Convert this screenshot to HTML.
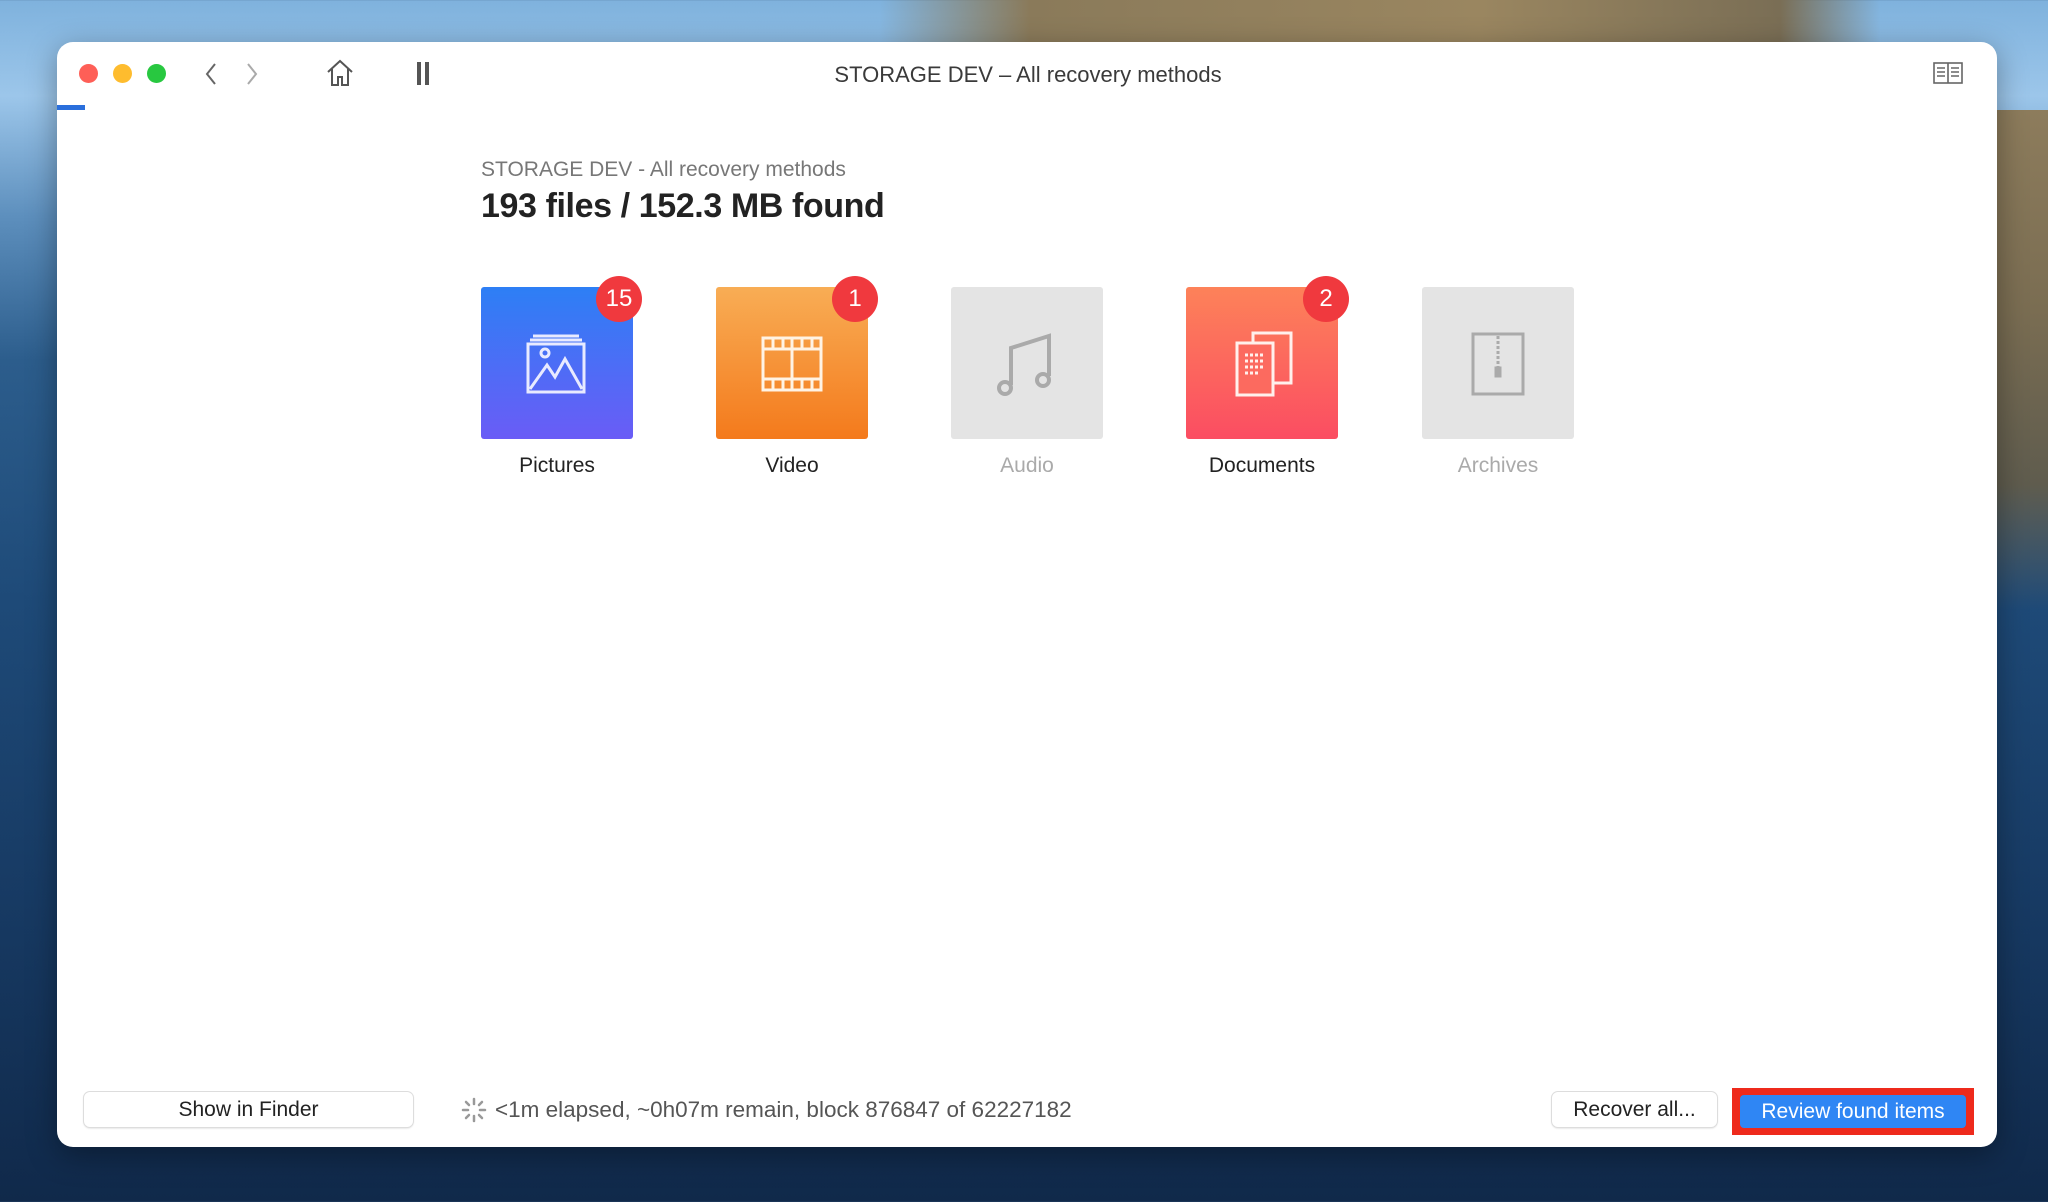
<!DOCTYPE html>
<html><head><meta charset="utf-8"><style>
*{margin:0;padding:0;box-sizing:border-box}
body{width:2048px;height:1202px;overflow:hidden;position:relative;font-family:"Liberation Sans",sans-serif;
background:linear-gradient(180deg,#7fb2dd 0%,#9cc6ea 8%,#5d8fbd 18%,#2c5d8c 30%,#1e4a78 50%,#173a63 75%,#10294a 100%);}
.mtn{position:absolute;left:880px;top:0;width:1000px;height:60px;background:linear-gradient(90deg,rgba(140,120,90,0) 0%,#8a7a5a 15%,#9a8660 60%,#7a6e55 90%,rgba(120,160,200,0) 100%)}
.cliff{position:absolute;right:0;top:110px;width:52px;height:500px;background:linear-gradient(180deg,#8d7c5c 0%,#7a6d52 40%,#5f5c4e 75%,rgba(40,70,100,0) 100%)}
.win{position:absolute;left:57px;top:42px;width:1940px;height:1105px;background:#fff;border-radius:16px;box-shadow:0 8px 30px rgba(0,0,0,.35);overflow:hidden}
.dot{position:absolute;top:64px;width:19px;height:19px;border-radius:50%}
.title{position:absolute;top:62px;left:4px;width:2048px;text-align:center;font-size:22px;color:#3a3a3a}
.tile{position:absolute;top:287px;width:152px;height:152px;border-radius:3px}
.lbl{position:absolute;top:454px;width:152px;text-align:center;font-size:21px;color:#222}
.badge{position:absolute;width:46px;height:46px;border-radius:50%;background:#f0393e;color:#fff;font-size:24px;text-align:center;line-height:46px}
.btn{position:absolute;top:1092px;height:35px;background:#fff;border-radius:6px;box-shadow:0 0 0 1px #ddd,0 1px 2px rgba(0,0,0,.2);font-size:21px;text-align:center;line-height:35px;color:#222}
</style></head><body>
<div class="mtn"></div><div class="cliff"></div>
<div class="win"></div>
<div class="dot" style="left:79px;background:#fe5f57"></div>
<div class="dot" style="left:113px;background:#febc2e"></div>
<div class="dot" style="left:147px;background:#28c840"></div>
<svg style="position:absolute;left:200px;top:62px" width="70" height="24" fill="none" stroke-width="2"><path d="M15 2 L7 12 L15 22" stroke="#666"/><path d="M48 2 L56 12 L48 22" stroke="#aaa"/></svg>
<svg style="position:absolute;left:325px;top:58px" width="30" height="30" fill="none" stroke="#555" stroke-width="2"><path d="M3 14 L15 3 L27 14 M7 11 V27 H13 V19 H17 V27 H23 V11"/></svg>
<div style="position:absolute;left:417px;top:62px;width:4px;height:23px;background:#555"></div>
<div style="position:absolute;left:425px;top:62px;width:4px;height:23px;background:#555"></div>
<div class="title">STORAGE DEV – All recovery methods</div>
<svg style="position:absolute;left:1933px;top:62px" width="30" height="22" fill="none" stroke="#666" stroke-width="1.6"><rect x="1" y="1" width="28" height="20"/><path d="M15 1V21M4 6H12M4 10H12M4 14H12M18 6H26M18 10H26M18 14H26"/></svg>
<div style="position:absolute;left:57px;top:105px;width:28px;height:5px;background:#2a6fdc"></div>
<div style="position:absolute;left:481px;top:158px;font-size:21px;color:#777">STORAGE DEV - All recovery methods</div>
<div style="position:absolute;left:481px;top:187px;font-size:34px;font-weight:bold;color:#222;letter-spacing:-0.4px">193 files / 152.3 MB found</div>

<div class="tile" style="left:481px;background:linear-gradient(180deg,#2d7ff5,#6a5cf6)"></div>
<svg style="position:absolute;left:525px;top:333px" width="62" height="62" fill="none" stroke="#e8eaff" stroke-width="3"><path d="M8 3H54M5 7H57"/><rect x="3" y="11" width="56" height="48"/><circle cx="20" cy="20" r="4"/><path d="M5 56 L22 32 L30 44 L40 26 L57 56"/></svg>
<div class="badge" style="left:596px;top:276px">15</div>
<div class="lbl" style="left:481px">Pictures</div>

<div class="tile" style="left:716px;background:linear-gradient(180deg,#f8ad55,#f47a1c)"></div>
<svg style="position:absolute;left:761px;top:336px" width="62" height="56" fill="none" stroke="#fff3e4" stroke-width="3"><rect x="2" y="2" width="58" height="52"/><path d="M2 13H60M2 43H60M31 13V43M12 2V13M22 2V13M31 2V13M41 2V13M51 2V13M12 43V54M22 43V54M31 43V54M41 43V54M51 43V54"/></svg>
<div class="badge" style="left:832px;top:276px">1</div>
<div class="lbl" style="left:716px">Video</div>

<div class="tile" style="left:951px;background:#e4e4e4"></div>
<svg style="position:absolute;left:995px;top:330px" width="62" height="70" fill="none" stroke="#aaa" stroke-width="4"><path d="M16 55V18L54 6V46M16 18L54 6"/><circle cx="10" cy="58" r="6"/><circle cx="48" cy="50" r="6"/></svg>
<div class="lbl" style="left:951px;color:#aaa">Audio</div>

<div class="tile" style="left:1186px;background:linear-gradient(180deg,#fd8259,#fb4d62)"></div>
<svg style="position:absolute;left:1231px;top:330px" width="64" height="68" fill="none" stroke="#fff0ec" stroke-width="3"><rect x="22" y="3" width="38" height="50"/><rect x="6" y="13" width="36" height="52" fill="#fc6a5f"/><path d="M14 25H34M14 31H34M14 37H34M14 43H28M6 18V62" stroke-dasharray="3 2"/></svg>
<div class="badge" style="left:1303px;top:276px">2</div>
<div class="lbl" style="left:1186px">Documents</div>

<div class="tile" style="left:1422px;background:#e4e4e4"></div>
<svg style="position:absolute;left:1471px;top:332px" width="54" height="64" fill="none" stroke="#aaa" stroke-width="3"><rect x="2" y="2" width="50" height="60"/><path d="M27 4V40" stroke-dasharray="3 2"/><path d="M25 36H29V44H25Z" fill="#aaa"/></svg>
<div class="lbl" style="left:1422px;color:#aaa">Archives</div>

<div class="btn" style="left:84px;width:329px">Show in Finder</div>
<svg style="position:absolute;left:461px;top:1097px" width="26" height="26" stroke="#999" stroke-width="2.5" stroke-linecap="round"><path d="M13 2V7M13 19V24M2 13H7M19 13H24M5 5L8 8M18 18L21 21M5 21L8 18M18 8L21 5"/></svg>
<div style="position:absolute;left:495px;top:1097px;font-size:22.5px;color:#555">&lt;1m elapsed, ~0h07m remain, block 876847 of 62227182</div>
<div class="btn" style="left:1552px;width:165px">Recover all...</div>
<div style="position:absolute;left:1732px;top:1088px;width:242px;height:47px;background:#ee2a1c"></div>
<div style="position:absolute;left:1740px;top:1095px;width:226px;height:33px;background:#2f86f4;border-radius:4px;color:#fff;font-size:21px;text-align:center;line-height:33px">Review found items</div>
</body></html>
